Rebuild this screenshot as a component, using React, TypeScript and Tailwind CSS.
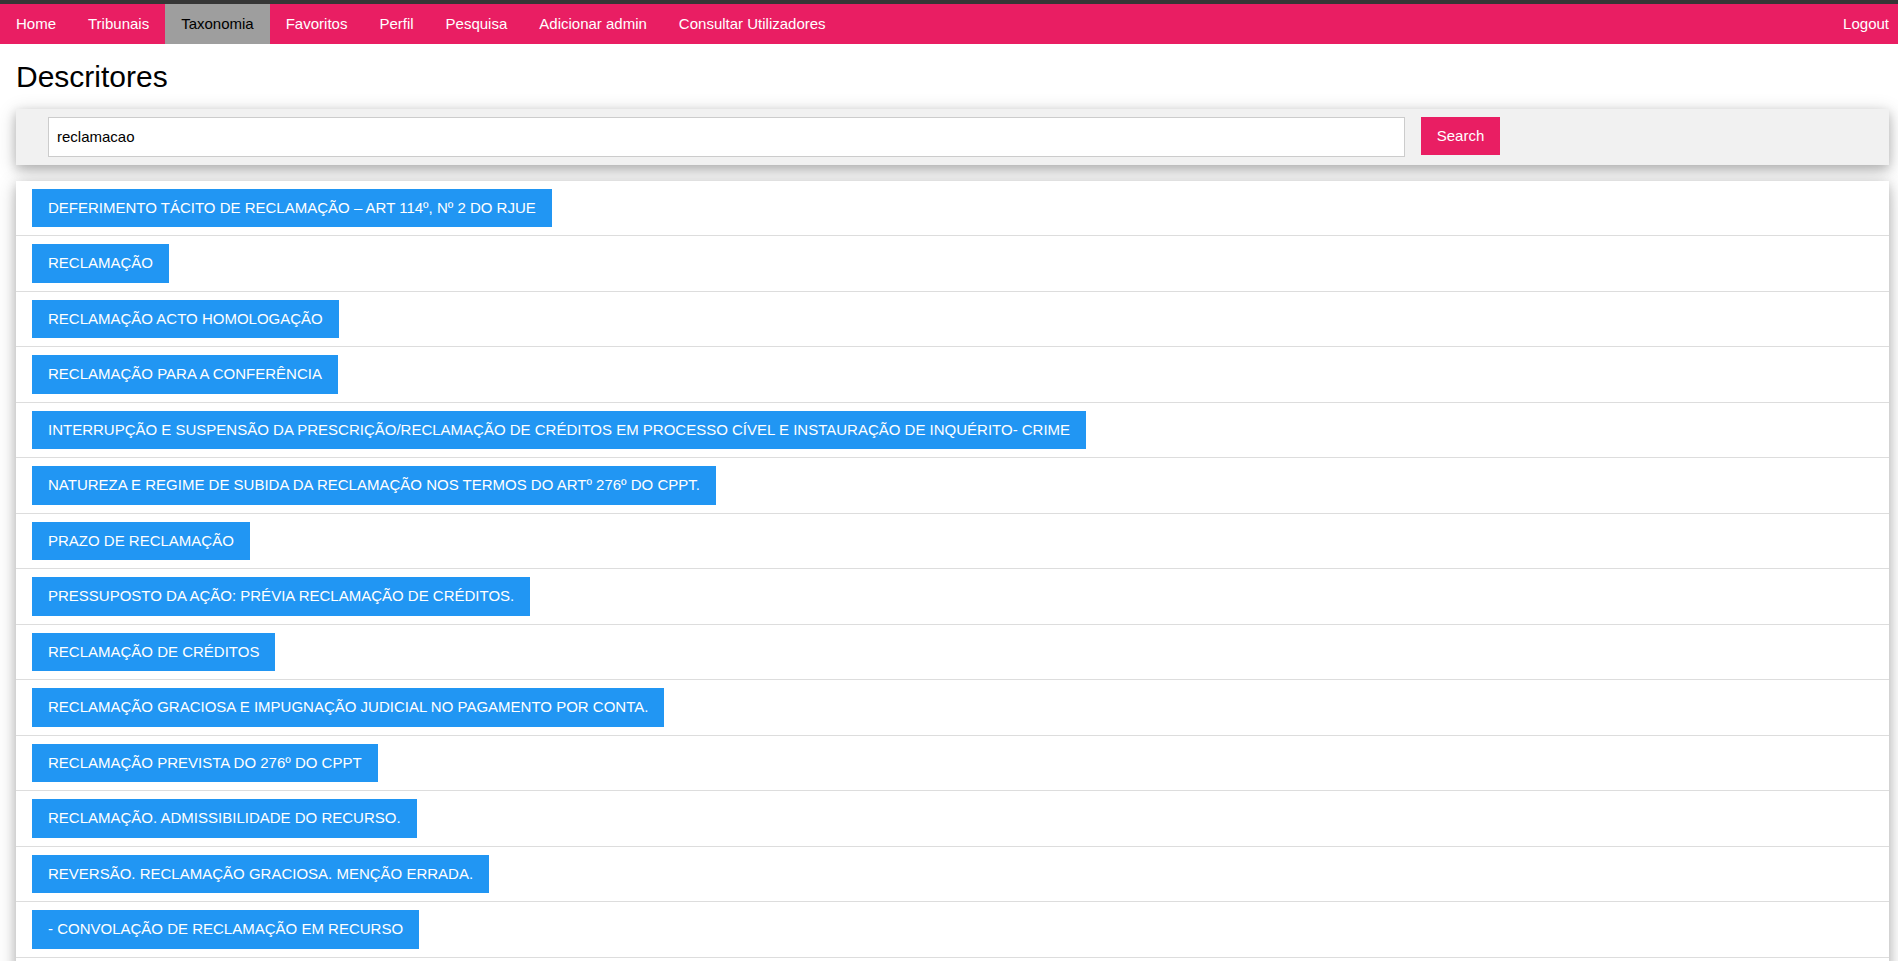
import React from 'react';

const navItems = [
  'Home',
  'Tribunais',
  'Taxonomia',
  'Favoritos',
  'Perfil',
  'Pesquisa',
  'Adicionar admin',
  'Consultar Utilizadores',
];

const descritores = [
  'DEFERIMENTO TÁCITO DE RECLAMAÇÃO – ART 114º, Nº 2 DO RJUE',
  'RECLAMAÇÃO',
  'RECLAMAÇÃO ACTO HOMOLOGAÇÃO',
  'RECLAMAÇÃO PARA A CONFERÊNCIA',
  'INTERRUPÇÃO E SUSPENSÃO DA PRESCRIÇÃO/RECLAMAÇÃO DE CRÉDITOS EM PROCESSO CÍVEL E INSTAURAÇÃO DE INQUÉRITO- CRIME',
  'NATUREZA E REGIME DE SUBIDA DA RECLAMAÇÃO NOS TERMOS DO ARTº 276º DO CPPT.',
  'PRAZO DE RECLAMAÇÃO',
  'PRESSUPOSTO DA AÇÃO: PRÉVIA RECLAMAÇÃO DE CRÉDITOS.',
  'RECLAMAÇÃO DE CRÉDITOS',
  'RECLAMAÇÃO GRACIOSA E IMPUGNAÇÃO JUDICIAL NO PAGAMENTO POR CONTA.',
  'RECLAMAÇÃO PREVISTA DO 276º DO CPPT',
  'RECLAMAÇÃO. ADMISSIBILIDADE DO RECURSO.',
  'REVERSÃO. RECLAMAÇÃO GRACIOSA. MENÇÃO ERRADA.',
  '- CONVOLAÇÃO DE RECLAMAÇÃO EM RECURSO',
];

const cardShadow = 'shadow-[0_4px_10px_0_rgba(0,0,0,0.2),0_4px_20px_0_rgba(0,0,0,0.19)]';

export default function App() {
  return (
    <div className="h-[961px] w-full overflow-hidden bg-white font-['Liberation_Sans',Arial,sans-serif] text-[15px] leading-[1.5] text-black">
      <div className="w-[1905px]">
        {/* top bar */}
        <div className="border-t-4 border-[#363636] bg-[#e91e63] text-white">
          <div className="flex h-[39.5px] items-stretch">
            {navItems.map((item) => (
              <a
                key={item}
                href="#"
                className={`flex items-center px-4 ${
                  item === 'Taxonomia' ? 'bg-[#9e9e9e] text-black' : 'text-white'
                }`}
              >
                {item}
              </a>
            ))}
            <a href="#" className="ml-auto flex items-center px-4 text-white">
              Logout
            </a>
          </div>
        </div>

        <div className="px-4">
          <h2 className="my-[10px] text-[30px] font-normal leading-[1.5]">Descritores</h2>

          <div className={`flex items-start bg-[#f1f1f1] py-2 ${cardShadow}`}>
            <div className="w-3/4 pl-8 pr-4">
              <input
                type="text"
                defaultValue="reclamacao"
                className="block h-[40px] w-full border border-[#ccc] bg-white px-2 text-[15px] outline-none"
              />
            </div>
            <button className="bg-[#e91e63] px-4 py-2 leading-[1.5] text-white">Search</button>
          </div>

          {/* list keeps going below the fold */}
          <ul className={`mt-4 min-h-[900px] bg-white ${cardShadow}`}>
            {descritores.map((d) => (
              <li key={d} className="border-b border-[#ddd] px-4 py-2">
                <button className="bg-[#2196f3] px-4 py-2 text-left leading-[1.5] text-white">{d}</button>
              </li>
            ))}
          </ul>
        </div>
      </div>
    </div>
  );
}
